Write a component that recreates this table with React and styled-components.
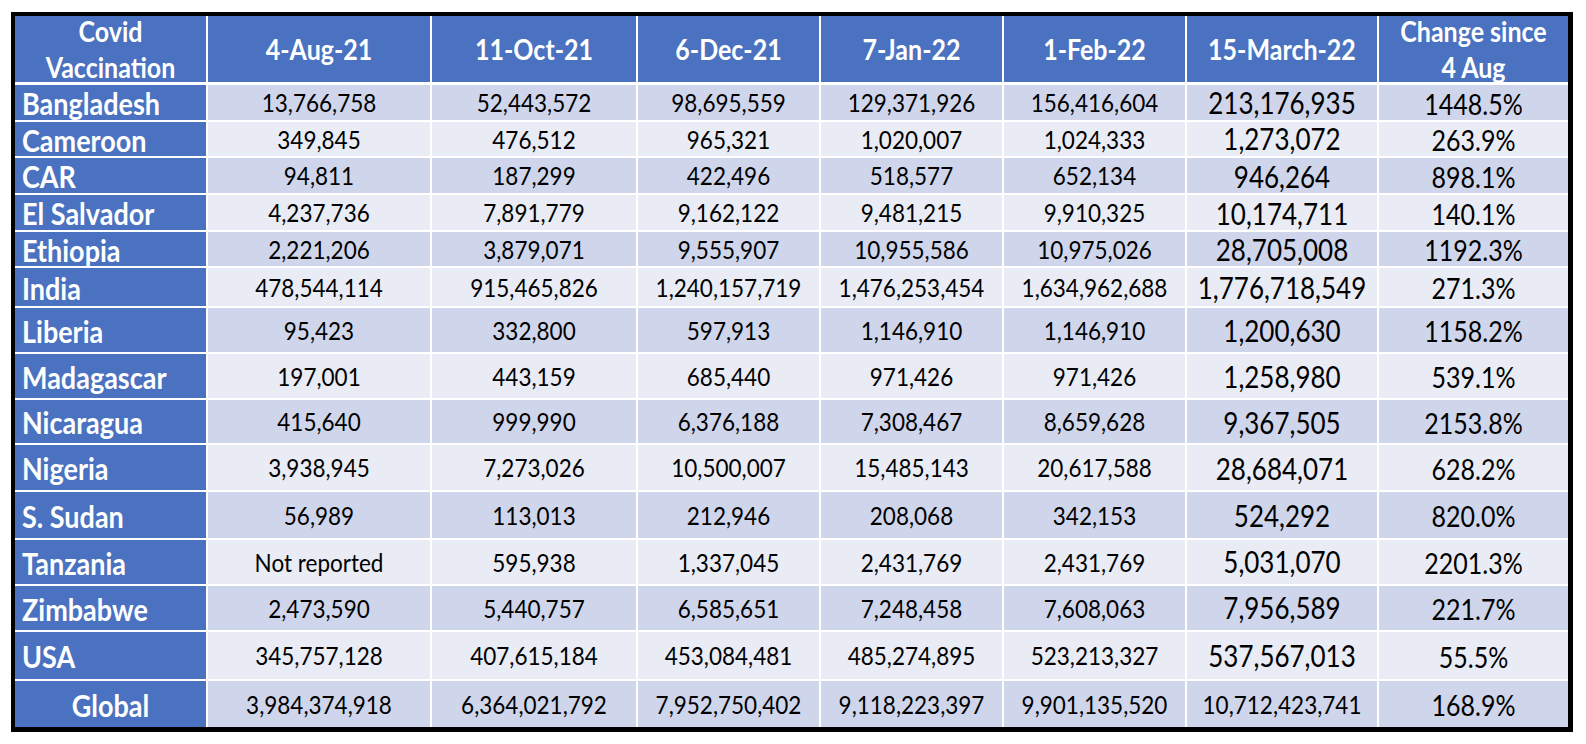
import React from 'react'
import styled, { createGlobalStyle } from 'styled-components'

const GlobalStyle = createGlobalStyle`
    html, body {
        margin: 0;
        padding: 0;
        background: #ffffff;
    }
    body {
        font-family: 'Lato', 'Open Sans', sans-serif;
    }
`

const columns = '191px 222px 204px 181px 181px 181px 190px 189px'

const headers = [
    'Covid Vaccination',
    '4-Aug-21',
    '11-Oct-21',
    '6-Dec-21',
    '7-Jan-22',
    '1-Feb-22',
    '15-March-22',
    'Change since 4 Aug',
]

const rows = [
    ['Bangladesh', '13,766,758', '52,443,572', '98,695,559', '129,371,926', '156,416,604', '213,176,935', '1448.5%', 35],
    ['Cameroon', '349,845', '476,512', '965,321', '1,020,007', '1,024,333', '1,273,072', '263.9%', 34],
    ['CAR', '94,811', '187,299', '422,496', '518,577', '652,134', '946,264', '898.1%', 35],
    ['El Salvador', '4,237,736', '7,891,779', '9,162,122', '9,481,215', '9,910,325', '10,174,711', '140.1%', 35],
    ['Ethiopia', '2,221,206', '3,879,071', '9,555,907', '10,955,586', '10,975,026', '28,705,008', '1192.3%', 34],
    ['India', '478,544,114', '915,465,826', '1,240,157,719', '1,476,253,454', '1,634,962,688', '1,776,718,549', '271.3%', 38],
    ['Liberia', '95,423', '332,800', '597,913', '1,146,910', '1,146,910', '1,200,630', '1158.2%', 44],
    ['Madagascar', '197,001', '443,159', '685,440', '971,426', '971,426', '1,258,980', '539.1%', 44],
    ['Nicaragua', '415,640', '999,990', '6,376,188', '7,308,467', '8,659,628', '9,367,505', '2153.8%', 43],
    ['Nigeria', '3,938,945', '7,273,026', '10,500,007', '15,485,143', '20,617,588', '28,684,071', '628.2%', 45],
    ['S. Sudan', '56,989', '113,013', '212,946', '208,068', '342,153', '524,292', '820.0%', 46],
    ['Tanzania', 'Not reported', '595,938', '1,337,045', '2,431,769', '2,431,769', '5,031,070', '2201.3%', 44],
    ['Zimbabwe', '2,473,590', '5,440,757', '6,585,651', '7,248,458', '7,608,063', '7,956,589', '221.7%', 44],
    ['USA', '345,757,128', '407,615,184', '453,084,481', '485,274,895', '523,213,327', '537,567,013', '55.5%', 47],
]

const globalRow = ['Global', '3,984,374,918', '6,364,021,792', '7,952,750,402', '9,118,223,397', '9,901,135,520', '10,712,423,741', '168.9%', 46]

const App = () => {
    return (
        <Page>
            <GlobalStyle />
            <Table>
                <HeadRow>
                    {headers.map((h, i) => (
                        <HeadCell key={h} $wrap={i === 0 || i === 7}>
                            <Label>{h}</Label>
                        </HeadCell>
                    ))}
                </HeadRow>

                {rows.map((r, idx) => (
                    <Row key={r[0]} $height={r[8]}>
                        <Country>
                            <Label>{r[0]}</Label>
                        </Country>
                        {r.slice(1, 6).map((v, i) => (
                            <Cell key={i} $band={idx % 2 === 0}>
                                <Label>{v}</Label>
                            </Cell>
                        ))}
                        <Cell $band={idx % 2 === 0} $size='26px'>
                            <Label>{r[6]}</Label>
                        </Cell>
                        <Cell $band={idx % 2 === 0} $size='25px'>
                            <Label>{r[7]}</Label>
                        </Cell>
                    </Row>
                ))}

                {/** global total */}
                <Row $height={globalRow[8]}>
                    <Country $center>
                        <Label>{globalRow[0]}</Label>
                    </Country>
                    {globalRow.slice(1, 7).map((v, i) => (
                        <Cell key={i} $band>
                            <Label>{v}</Label>
                        </Cell>
                    ))}
                    <Cell $band $size='25px'>
                        <Label>{globalRow[7]}</Label>
                    </Cell>
                </Row>
            </Table>
        </Page>
    )
}

export default App

const Page = styled.div`
    padding: 12px 0 0 11px;
`

const Table = styled.div`
    width: 1553px;
    display: flex;
    flex-direction: column;
    gap: 2px;
    background: #ffffff;
    border-style: solid;
    border-color: #000000;
    border-width: 4px 5px 5px 4px;
`

const HeadRow = styled.div`
    display: grid;
    grid-template-columns: ${columns};
    column-gap: 2px;
    height: 66px;
    margin-bottom: 1px;
`

const Row = styled.div`
    display: grid;
    grid-template-columns: ${columns};
    column-gap: 2px;
    height: ${(props) => props.$height}px;
`

const Label = styled.span`
    display: inline-block;
    transform: scaleY(1.15);
`

const HeadCell = styled.div`
    display: flex;
    align-items: center;
    justify-content: center;
    text-align: center;
    background: #4a72c0;
    color: #ffffff;
    font-weight: 700;
    font-size: 25px;
    line-height: 31px;
    padding: ${(props) => (props.$wrap ? '0 12px' : '0')};
`

const Country = styled.div`
    display: flex;
    align-items: center;
    justify-content: ${(props) => (props.$center ? 'center' : 'flex-start')};
    padding-left: ${(props) => (props.$center ? '0' : '7px')};
    background: #4a72c0;
    color: #ffffff;
    font-weight: 700;
    font-size: 27px;
`

const Cell = styled.div`
    display: flex;
    align-items: center;
    justify-content: center;
    background: ${(props) => (props.$band ? '#cfd5ea' : '#e9ebf5')};
    color: #000000;
    font-weight: 400;
    font-size: ${(props) => props.$size || '22.5px'};
`
